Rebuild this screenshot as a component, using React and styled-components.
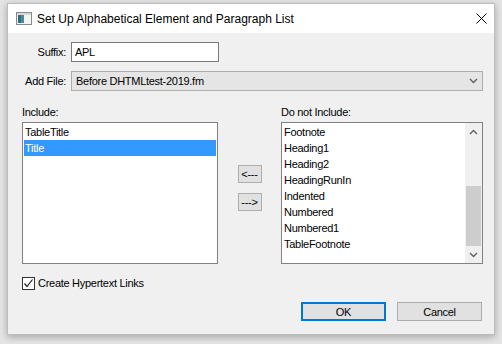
import styled, { createGlobalStyle } from "styled-components";

const Global = createGlobalStyle`
    html, body {
        margin: 0;
        background: #e4e4e4;
    }
    body {
        font-family: "Liberation Sans", Arial, sans-serif;
        font-size: 11px;
        letter-spacing: -0.28px;
        line-height: 14px;
        color: #000;
    }
`;

const Escritorio = styled.div`
    width: 502px;
    height: 344px;
    padding: 3px 0 0 7px;
    box-sizing: border-box;
`;

const Ventana = styled.div`
    width: 488px;
    height: 332px;
    box-sizing: border-box;
    border: 1px solid #bdbdbd;
    background: #f0f0f0;
    box-shadow: 0 2px 7px rgba(0, 0, 0, 0.28);
    display: flex;
    flex-direction: column;
`;

const BarraTitulo = styled.div`
    height: 29px;
    background: #fff;
    display: flex;
    align-items: center;
    padding-left: 8px;
    gap: 5px;
    font-size: 12px;
    letter-spacing: 0;
`;

const Titulo = styled.span`
    flex: 1;
`;

const Cerrar = styled.div`
    width: 26px;
    height: 29px;
    display: flex;
    align-items: center;
    justify-content: center;
`;

const Cuerpo = styled.div`
    flex: 1;
    padding: 9px 11px 0 14px;
    display: flex;
    flex-direction: column;
`;

const Formulario = styled.div`
    display: grid;
    grid-template-columns: 44px 1fr;
    column-gap: 5px;
    row-gap: 9px;
    align-items: center;
`;

const Etiqueta = styled.label`
    text-align: right;
    white-space: nowrap;
`;

const Entrada = styled.div`
    height: 20px;
    box-sizing: border-box;
    width: ${(p) => p.$ancho || "100%"};
    border: 1px solid #7a7a7a;
    background: #fff;
    display: flex;
    align-items: center;
    padding-left: 3px;
`;

const Selector = styled.div`
    height: 20px;
    box-sizing: border-box;
    border: 1px solid #adadad;
    background: #e5e5e5;
    display: flex;
    align-items: center;
    padding: 0 4px 0 4px;
    span {
        flex: 1;
    }
`;

const Listas = styled.div`
    margin-top: 14px;
    display: grid;
    grid-template-columns: 196px 1fr 202px;
`;

const Columna = styled.div`
    display: flex;
    flex-direction: column;
    gap: 3px;
`;

const CajaLista = styled.div`
    height: 142px;
    box-sizing: border-box;
    border: 1px solid #828282;
    background: #fff;
    padding: 1px;
    display: flex;
`;

const Items = styled.div`
    flex: 1;
`;

const Item = styled.div`
    height: 16px;
    line-height: 16px;
    padding-left: 1px;
    background: ${(p) => (p.$activo ? "#3399ff" : "transparent")};
    color: ${(p) => (p.$activo ? "#fff" : "#000")};
    white-space: nowrap;
`;

const Scroll = styled.div`
    width: 17px;
    margin: -1px -1px -1px 0;
    background: #f0f0f0;
    display: flex;
    flex-direction: column;
    align-items: center;
`;

const FlechaScroll = styled.div`
    height: 17px;
    width: 17px;
    display: flex;
    align-items: center;
    justify-content: center;
`;

const PistaScroll = styled.div`
    flex: 1;
    width: 15px;
    display: flex;
    flex-direction: column;
`;

const Pulgar = styled.div`
    margin-top: 46px;
    height: 60px;
    background: #cdcdcd;
`;

const Flechas = styled.div`
    display: flex;
    flex-direction: column;
    align-items: center;
    gap: 10px;
    padding-top: 60px;
`;

const Boton = styled.button`
    width: ${(p) => p.$ancho || "24px"};
    height: ${(p) => p.$alto || "18px"};
    box-sizing: border-box;
    background: #e1e1e1;
    border: ${(p) => (p.$defecto ? "2px solid #0078d7" : "1px solid #adadad")};
    font-family: "Liberation Sans", Arial, sans-serif;
    font-size: 11px;
    letter-spacing: -0.28px;
    color: #000;
    padding: 0;
    display: flex;
    align-items: center;
    justify-content: center;
`;

const FilaCheck = styled.div`
    margin-top: 12px;
    display: flex;
    align-items: center;
    gap: 3px;
`;

const Check = styled.div`
    width: 13px;
    height: 13px;
    box-sizing: border-box;
    border: 1px solid #333;
    background: #fff;
    display: flex;
    align-items: center;
    justify-content: center;
`;

const Acciones = styled.div`
    margin-top: 12px;
    display: flex;
    justify-content: flex-end;
    gap: 11px;
    padding-right: 1px;
`;

const Chevron = ({ arriba }) => (
    <svg width="9" height="6" viewBox="0 0 9 6">
        <path
            d={arriba ? "M1 5 L4.5 1.5 L8 5" : "M1 1 L4.5 4.5 L8 1"}
            fill="none"
            stroke="#606060"
            strokeWidth="1.4"
        />
    </svg>
);

const incluir = ["TableTitle", "Title"];
const noIncluir = ["Footnote", "Heading1", "Heading2", "HeadingRunIn", "Indented", "Numbered", "Numbered1", "TableFootnote"];

const App = () => {
    return (
        <>
            <Global />
            <Escritorio>
                <Ventana>
                    <BarraTitulo>
                        <svg width="16" height="13" viewBox="0 0 16 13">
                            <rect x="0.5" y="0.5" width="15" height="12" fill="#f4f4f4" stroke="#8a8a8a" />
                            <rect x="1" y="1" width="14" height="2" fill="#d8d8d8" />
                            <rect x="2" y="3" width="6" height="8" fill="#4a8a9a" />
                            <rect x="2" y="3" width="3" height="8" fill="#2f6f80" />
                        </svg>
                        <Titulo>Set Up Alphabetical Element and Paragraph List</Titulo>
                        <Cerrar>
                            <svg width="11" height="11" viewBox="0 0 11 11">
                                <path d="M0.5 0.5 L10.5 10.5 M10.5 0.5 L0.5 10.5" stroke="#000" strokeWidth="1" />
                            </svg>
                        </Cerrar>
                    </BarraTitulo>
                    <Cuerpo>
                        <Formulario>
                            <Etiqueta>Suffix:</Etiqueta>
                            <Entrada $ancho="148px">APL</Entrada>
                            <Etiqueta>Add File:</Etiqueta>
                            <Selector>
                                <span>Before DHTMLtest-2019.fm</span>
                                <Chevron />
                            </Selector>
                        </Formulario>

                        <Listas>
                            <Columna>
                                <span>Include:</span>
                                <CajaLista>
                                    <Items>
                                        {incluir.map((nombre) => (
                                            <Item key={nombre} $activo={nombre === "Title"}>{nombre}</Item>
                                        ))}
                                    </Items>
                                </CajaLista>
                            </Columna>
                            <Flechas>
                                <Boton>&lt;---</Boton>
                                <Boton>---&gt;</Boton>
                            </Flechas>
                            <Columna>
                                <span>Do not Include:</span>
                                <CajaLista>
                                    <Items>
                                        {noIncluir.map((nombre) => (
                                            <Item key={nombre}>{nombre}</Item>
                                        ))}
                                    </Items>
                                    <Scroll>
                                        <FlechaScroll><Chevron arriba /></FlechaScroll>
                                        <PistaScroll>
                                            <Pulgar />
                                        </PistaScroll>
                                        <FlechaScroll><Chevron /></FlechaScroll>
                                    </Scroll>
                                </CajaLista>
                            </Columna>
                        </Listas>

                        <FilaCheck>
                            <Check>
                                <svg width="11" height="11" viewBox="0 0 11 11">
                                    <path d="M1.5 5.5 L4 8.5 L9.5 1.5" fill="none" stroke="#222" strokeWidth="1.2" />
                                </svg>
                            </Check>
                            <span>Create Hypertext Links</span>
                        </FilaCheck>

                        <Acciones>
                            <Boton $defecto $ancho="85px" $alto="19px">OK</Boton>
                            <Boton $ancho="85px" $alto="19px">Cancel</Boton>
                        </Acciones>
                    </Cuerpo>
                </Ventana>
            </Escritorio>
        </>
    );
};

export default App;
